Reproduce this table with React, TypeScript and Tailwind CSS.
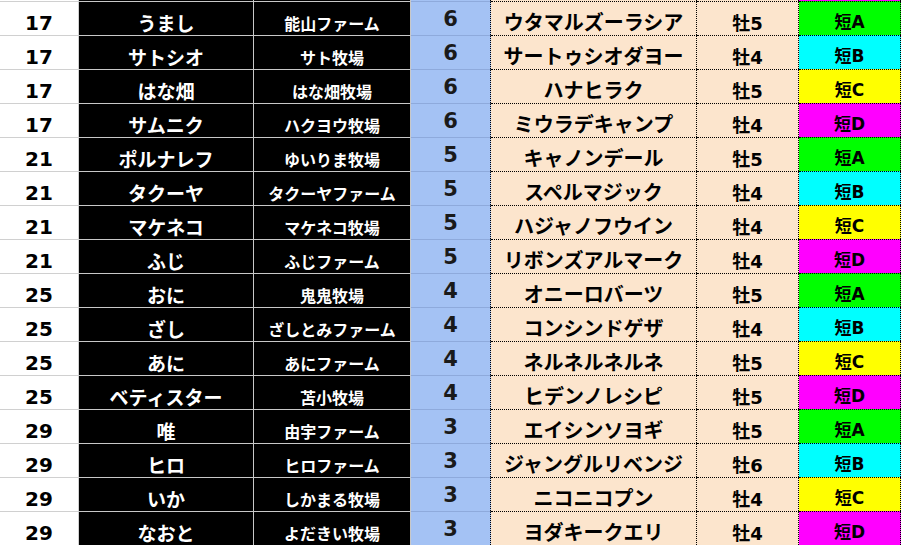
import React from 'react';

type Row = {
    rank: number;
    owner: string;
    farm: string;
    score: number;
    horse: string;
    age: string;
    dist: 'A' | 'B' | 'C' | 'D';
};

const rows: Row[] = [
    { rank: 17, owner: 'うまし', farm: '能山ファーム', score: 6, horse: 'ウタマルズーラシア', age: '牡5', dist: 'A' },
    { rank: 17, owner: 'サトシオ', farm: 'サト牧場', score: 6, horse: 'サートゥシオダヨー', age: '牡4', dist: 'B' },
    { rank: 17, owner: 'はな畑', farm: 'はな畑牧場', score: 6, horse: 'ハナヒラク', age: '牡5', dist: 'C' },
    { rank: 17, owner: 'サムニク', farm: 'ハクヨウ牧場', score: 6, horse: 'ミウラデキャンプ', age: '牡4', dist: 'D' },
    { rank: 21, owner: 'ポルナレフ', farm: 'ゆいりま牧場', score: 5, horse: 'キャノンデール', age: '牡5', dist: 'A' },
    { rank: 21, owner: 'タクーヤ', farm: 'タクーヤファーム', score: 5, horse: 'スペルマジック', age: '牡4', dist: 'B' },
    { rank: 21, owner: 'マケネコ', farm: 'マケネコ牧場', score: 5, horse: 'ハジャノフウイン', age: '牡4', dist: 'C' },
    { rank: 21, owner: 'ふじ', farm: 'ふじファーム', score: 5, horse: 'リボンズアルマーク', age: '牡4', dist: 'D' },
    { rank: 25, owner: 'おに', farm: '鬼鬼牧場', score: 4, horse: 'オニーロバーツ', age: '牡5', dist: 'A' },
    { rank: 25, owner: 'ざし', farm: 'ざしとみファーム', score: 4, horse: 'コンシンドゲザ', age: '牡4', dist: 'B' },
    { rank: 25, owner: 'あに', farm: 'あにファーム', score: 4, horse: 'ネルネルネルネ', age: '牡5', dist: 'C' },
    { rank: 25, owner: 'ベティスター', farm: '苫小牧場', score: 4, horse: 'ヒデンノレシピ', age: '牡5', dist: 'D' },
    { rank: 29, owner: '唯', farm: '由宇ファーム', score: 3, horse: 'エイシンソヨギ', age: '牡5', dist: 'A' },
    { rank: 29, owner: 'ヒロ', farm: 'ヒロファーム', score: 3, horse: 'ジャングルリベンジ', age: '牡6', dist: 'B' },
    { rank: 29, owner: 'いか', farm: 'しかまる牧場', score: 3, horse: 'ニコニコプン', age: '牡4', dist: 'C' },
    { rank: 29, owner: 'なおと', farm: 'よだきい牧場', score: 3, horse: 'ヨダキークエリ', age: '牡4', dist: 'D' },
];

const distBg: Record<Row['dist'], string> = {
    A: 'bg-[#00ff00]',
    B: 'bg-[#00ffff]',
    C: 'bg-[#ffff00]',
    D: 'bg-[#ff00ff]',
};

const grid = 'grid grid-cols-[79px_175px_157px_80px_206px_102px_102px]';
const cell = 'flex items-end justify-center leading-none whitespace-nowrap';
// Latin digits and letters read like Verdana in the sheet, so DejaVu first there
const latin = "font-['DejaVu_Sans','Noto_Sans_CJK_JP',sans-serif]";

export default function App() {
    return (
        <div className="w-[902px] h-[545px] overflow-hidden bg-white font-bold font-['Noto_Sans_CJK_JP','Noto_Sans',sans-serif]">
            {/* sliver of the row above */}
            <div className={`${grid} h-[1px]`}>
                <div className="bg-white border-r border-[#d0d0d0]" />
                <div className="bg-black border-r border-[#c8c8c8]" />
                <div className="bg-black border-r border-[#c8c8c8]" />
                <div className="bg-[#a4c2f4] border-r border-dotted border-black" />
                <div className="bg-[#fce5cd] border-r border-dotted border-black" />
                <div className="bg-[#fce5cd] border-r border-dotted border-black" />
                <div className="bg-[#ff00ff] border-r border-dotted border-black" />
            </div>
            {rows.map((r, i) => (
                <div key={i} className={`${grid} h-[34px]`}>
                    <div className={`${cell} ${latin} bg-white text-black border-t border-r border-[#d0d0d0] text-[20px] pb-[2px]`}>
                        {r.rank}
                    </div>
                    <div className={`${cell} bg-black text-white border-t border-r border-[#c8c8c8] text-[19px] pb-[3px]`}>
                        {r.owner}
                    </div>
                    <div className={`${cell} bg-black text-white border-t border-r border-[#c8c8c8] text-[16px] pb-[4px]`}>
                        {r.farm}
                    </div>
                    <div className={`${cell} ${latin} bg-[#a4c2f4] text-[#1a1a1a] border-t border-t-[#8eaadc] border-r border-r-black [border-right-style:dotted] text-[21px] pb-[5px]`}>
                        {r.score}
                    </div>
                    <div className={`${cell} bg-[#fce5cd] text-black border-t border-r border-dotted border-black text-[20px] pb-[3px]`}>
                        {r.horse}
                    </div>
                    <div className={`${cell} ${latin} bg-[#fce5cd] text-black border-t border-r border-dotted border-black text-[18px] pb-[2px]`}>
                        {r.age}
                    </div>
                    <div className={`${cell} ${latin} ${distBg[r.dist]} text-black border-t border-r border-dotted border-black text-[17px] pb-[4px]`}>
                        短{r.dist}
                    </div>
                </div>
            ))}
        </div>
    );
}
